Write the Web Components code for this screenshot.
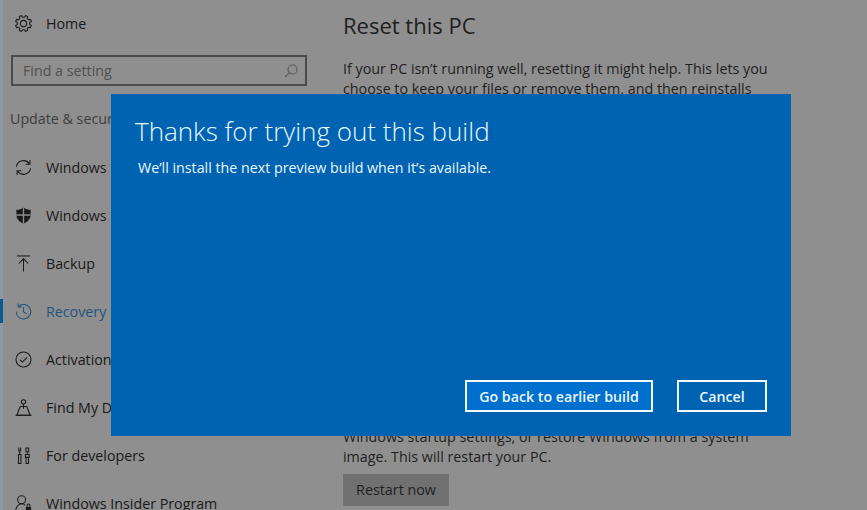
<!DOCTYPE html>
<html lang="en">
<head>
<meta charset="utf-8">
<title>Settings</title>
<style>
  html, body { margin: 0; height: 100%; overflow: hidden; background: #8f8f8f; }
  body { font-family: "Open Sans", "Noto Sans", "Liberation Sans", sans-serif; }
</style>
</head>
<body>
<settings-page>
  <nav-pane slot="nav">
    <nav-item label="Home" first>
      <svg viewBox="0 0 18 18"><path id="gear"/><circle cx="9" cy="9" r="3.300"/></svg>
    </nav-item>
    <search-box placeholder="Find a setting"></search-box>
    <div class="group">Update &amp; security</div>
    <nav-item label="Windows Update">
      <svg viewBox="0 0 18 18"><path d="M1.500 8A7.600 7.600 0 0 1 15.200 5"/><path d="M15.800 1v4.500h-4.500"/><path d="M16.500 10A7.600 7.600 0 0 1 2.800 13"/><path d="M2.200 17v-4.500h4.500"/></svg>
    </nav-item>
    <nav-item label="Windows Defender">
      <svg viewBox="0 0 18 18"><path fill="currentColor" stroke="none" d="M9 .5c2 1.600 4.600 2.400 7.500 2.500v5.400c0 4.100-3.100 7.300-7.500 9.100-4.400-1.800-7.500-5-7.500-9.100V3C4.400 2.900 7 2.100 9 .5z"/><path stroke="#8f8f8f" stroke-width="1.400" d="M9 .5v17M1.500 8.500h15"/></svg>
    </nav-item>
    <nav-item label="Backup">
      <svg viewBox="0 0 18 18"><path d="M2 1h14"/><path d="M9 17.500V4"/><path d="M4 9l5-5 5 5"/></svg>
    </nav-item>
    <nav-item label="Recovery" active>
      <svg viewBox="0 0 18 18"><path d="M3.500 3.800A7.700 7.700 0 1 1 1.300 9"/><path d="M3.300 .5v3.600h3.600"/><path d="M9 4.500v5l3.500 2"/></svg>
    </nav-item>
    <nav-item label="Activation">
      <svg viewBox="0 0 18 18"><circle cx="9" cy="9" r="8"/><path d="M5.300 9.300l2.500 2.400 5-5"/></svg>
    </nav-item>
    <nav-item label="Find My Device">
      <svg viewBox="0 0 18 18"><circle cx="9" cy="3" r="2.300"/><path d="M9 5.300v5"/><path d="M5.500 8h7l3.500 9.200H2z"/><path d="M.5 17.200h17"/></svg>
    </nav-item>
    <nav-item label="For developers">
      <svg viewBox="0 0 18 18"><path d="M4 .5v3.500h2V.5M5 4v4M3.700 8h2.600v9.500H3.700zM11.500 1h3v4h-3zM13 5v3M11 8h4v3h-4zM11.700 11h2.600v6.500h-2.600z"/></svg>
    </nav-item>
    <nav-item label="Windows Insider Program">
      <svg viewBox="0 0 18 18"><circle cx="7" cy="5" r="4.200"/><path d="M.8 17.500c0-4.500 2.600-8.300 6.200-8.300 1.500 0 2.800.6 3.800 1.600"/><path fill="currentColor" stroke="none" d="M11.500 12.500h5.500v5h-5.500z"/><path d="M12.800 12.500v-1.500a1.500 1.500 0 0 1 3 0v1.500"/></svg>
    </nav-item>
  </nav-pane>
  <recovery-content slot="main"></recovery-content>
</settings-page>
<rollback-dialog heading="Thanks for trying out this build" message="We’ll install the next preview build when it’s available.">
  <dialog-button primary>Go back to earlier build</dialog-button>
  <dialog-button>Cancel</dialog-button>
</rollback-dialog>

<script>
  // Page frame: nav column on the left, content on the right
  class SettingsPage extends HTMLElement {
    constructor() {
      super();
      this.attachShadow({ mode: "open" });
      this.shadowRoot.innerHTML = `
        <style>
          :host {
            display: grid;
            grid-template-columns: 343px 1fr;
            height: 510px;
            overflow: hidden;
            background: linear-gradient(90deg, #8a98a8 3px, #8f8f8f 3px);
          }
        </style>
        <slot name="nav"></slot>
        <slot name="main"></slot>
      `;
    }
  }

  class NavPane extends HTMLElement {
    constructor() {
      super();
      this.attachShadow({ mode: "open" });
      this.shadowRoot.innerHTML = `
        <style>
          :host { display: flex; flex-direction: column; width: 320px; }
          ::slotted(.group) {
            flex: none;
            font-size: 14.250px;
            color: #3d3d3d;
            padding: 2px 0 0 10px;
            height: 34px;
            line-height: 20px;
          }
        </style>
        <slot></slot>
      `;
    }
  }

  class NavItem extends HTMLElement {
    constructor() {
      super();
      this.attachShadow({ mode: "open" });
      this.shadowRoot.innerHTML = `
        <style>
          :host {
            display: flex;
            align-items: center;
            height: 48px;
            flex: none;
            position: relative;
            color: #191919;
            font-size: 14.250px;
            white-space: nowrap;
          }
          :host([first]) { height: 47px; }
          :host([active]) { color: #1f5482; }
          :host([active])::before {
            content: "";
            position: absolute;
            left: 0;
            top: 12px;
            width: 3px;
            height: 24px;
            background: #0b5a96;
          }
          .icon { width: 17px; height: 17px; margin: 0 14px 0 15px; flex: none; display: flex; }
          ::slotted(svg) {
            width: 17px;
            height: 17px;
            fill: none;
            stroke: currentColor;
            stroke-width: 1.100;
          }
        </style>
        <span class="icon"><slot></slot></span>
        <span class="label"></span>
      `;
    }

    connectedCallback() {
      this.shadowRoot.querySelector(".label").textContent = this.getAttribute("label");
    }
  }

  class SearchBox extends HTMLElement {
    constructor() {
      super();
      this.attachShadow({ mode: "open" });
      this.shadowRoot.innerHTML = `
        <style>
          :host {
            display: flex;
            align-items: center;
            justify-content: space-between;
            box-sizing: border-box;
            flex: none;
            width: 296px;
            height: 31px;
            margin: 8px 0 21px 11px;
            padding: 0 7px 0 10px;
            border: 2px solid #4b4b4b;
            color: #4f4f4f;
            font-size: 14.250px;
          }
          svg { width: 14px; height: 14px; fill: none; stroke: #5c5c5c; stroke-width: 1.100; }
        </style>
        <span class="text"></span>
        <svg viewBox="0 0 14 14"><circle cx="8.500" cy="5.500" r="4.500"/><path d="M5.200 8.800L1 13"/></svg>
      `;
    }

    connectedCallback() {
      this.shadowRoot.querySelector(".text").textContent = this.getAttribute("placeholder");
    }
  }

  class RecoveryContent extends HTMLElement {
    constructor() {
      super();
      this.attachShadow({ mode: "open" });
      this.shadowRoot.innerHTML = `
        <style>
          :host { display: block; color: #1e1e1e; font-size: 14.300px; line-height: 20px; white-space: nowrap; }
          h2 { font-weight: 400; font-size: 22px; line-height: 30px; margin: 10px 0 19px; }
          p { margin: 0; }
          .lower { margin-top: 308px; }
          .restart {
            display: flex;
            align-items: center;
            justify-content: center;
            width: 106px;
            height: 32px;
            margin-top: 7px;
            background: #717171;
          }
        </style>
        <h2>Reset this PC</h2>
        <p>If your PC isn’t running well, resetting it might help. This lets you<br>
        choose to keep your files or remove them, and then reinstalls<br>Windows.</p>
        <p class="lower">Windows startup settings, or restore Windows from a system<br>
        image. This will restart your PC.</p>
        <div class="restart">Restart now</div>
      `;
    }
  }

  // The blue dialog sits over the dimmed settings page
  class RollbackDialog extends HTMLElement {
    constructor() {
      super();
      this.attachShadow({ mode: "open" });
      this.shadowRoot.innerHTML = `
        <style>
          :host {
            position: absolute;
            left: 111px;
            top: 94px;
            width: 680px;
            height: 342px;
            box-sizing: border-box;
            display: flex;
            flex-direction: column;
            padding: 19px 24px 24px 24px;
            background: #0063b1;
            color: #eaf7ff;
          }
          h1 { font-weight: 300; font-size: 26px; line-height: 36px; margin: 0; }
          p { font-size: 14.250px; line-height: 20px; margin: 9px 0 0 3px; flex: 1; }
          .actions { display: flex; justify-content: flex-end; gap: 24px; }
        </style>
        <h1></h1>
        <p></p>
        <div class="actions"><slot></slot></div>
      `;
    }

    connectedCallback() {
      this.shadowRoot.querySelector("h1").textContent = this.getAttribute("heading");
      this.shadowRoot.querySelector("p").textContent = this.getAttribute("message");
    }
  }

  class DialogButton extends HTMLElement {
    constructor() {
      super();
      this.attachShadow({ mode: "open" });
      this.shadowRoot.innerHTML = `
        <style>
          :host {
            display: flex;
            align-items: center;
            justify-content: center;
            box-sizing: border-box;
            width: 90px;
            height: 32px;
            border: 2px solid #f2fbff;
            color: #eaf7ff;
            font-size: 14.200px;
            font-weight: 600;
            white-space: nowrap;
          }
          :host([primary]) { width: 188px; background: #0070cf; }
        </style>
        <slot></slot>
      `;
    }
  }

  // 8 tooth gear outline for the Home icon
  function gearPath(teeth, outer, inner) {
    const step = 360 / teeth;
    const pt = (r, deg) => {
      const a = deg * Math.PI / 180;
      return (9 + r * Math.cos(a)).toFixed(2) + " " + (9 + r * Math.sin(a)).toFixed(2);
    };
    let d = "";
    for (let i = 0; i < teeth; i++) {
      const a = i * step + step / 2;
      d += (i ? "L" : "M") + pt(inner, a - 14) + "L" + pt(outer, a - 8) + "L" + pt(outer, a + 8) + "L" + pt(inner, a + 14);
    }
    return d + "Z";
  }
  document.getElementById("gear").setAttribute("d", gearPath(8, 8.6, 6.600));

  customElements.define("settings-page", SettingsPage);
  customElements.define("nav-pane", NavPane);
  customElements.define("nav-item", NavItem);
  customElements.define("search-box", SearchBox);
  customElements.define("recovery-content", RecoveryContent);
  customElements.define("rollback-dialog", RollbackDialog);
  customElements.define("dialog-button", DialogButton);
</script>
</body>
</html>
